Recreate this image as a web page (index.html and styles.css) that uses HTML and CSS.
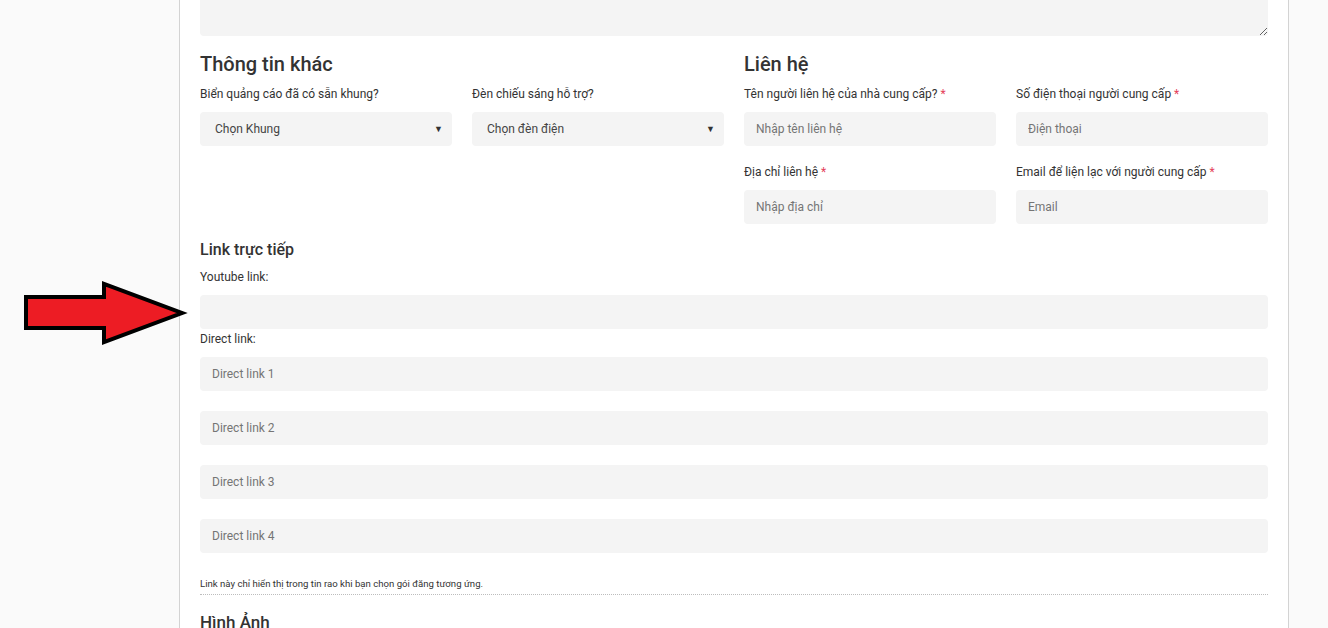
FILE: index.html
```html
<!DOCTYPE html>
<html lang="vi">
<head>
<meta charset="utf-8">
<title>Form</title>
<link rel="stylesheet" href="styles.css">
</head>
<body>
<svg class="arrow" width="170" height="70" viewBox="0 0 170 70">
  <polygon points="2,16 80,16 80,3 158,32 80,61 80,47 2,47" fill="#ed1c24" stroke="#000" stroke-width="4" stroke-linejoin="miter"/>
</svg>
<div class="panel">
  <textarea class="textarea"></textarea>
  <div class="two">
    <section class="section">
      <h2 class="title">Thông tin khác</h2>
      <div class="grid">
        <div class="field">
          <label class="label">Biển quảng cáo đã có sẵn khung?</label>
          <div class="select"><span>Chọn Khung</span><span class="caret">▼</span></div>
        </div>
        <div class="field">
          <label class="label">Đèn chiếu sáng hỗ trợ?</label>
          <div class="select"><span>Chọn đèn điện</span><span class="caret">▼</span></div>
        </div>
      </div>
    </section>
    <section class="section">
      <h2 class="title">Liên hệ</h2>
      <div class="grid">
        <div class="field">
          <label class="label">Tên người liên hệ của nhà cung cấp? <span class="req">*</span></label>
          <input class="input" placeholder="Nhập tên liên hệ">
        </div>
        <div class="field">
          <label class="label">Số điện thoại người cung cấp <span class="req">*</span></label>
          <input class="input" placeholder="Điện thoại">
        </div>
        <div class="field">
          <label class="label">Địa chỉ liên hệ <span class="req">*</span></label>
          <input class="input" placeholder="Nhập địa chỉ">
        </div>
        <div class="field">
          <label class="label">Email để liện lạc với người cung cấp <span class="req">*</span></label>
          <input class="input" placeholder="Email">
        </div>
      </div>
    </section>
  </div>

  <h3 class="subtitle">Link trực tiếp</h3>
  <label class="label yt-label">Youtube link:</label>
  <input class="input wide">
  <label class="label dl-label">Direct link:</label>
  <div class="links">
    <input class="input wide" placeholder="Direct link 1">
    <input class="input wide" placeholder="Direct link 2">
    <input class="input wide" placeholder="Direct link 3">
    <input class="input wide" placeholder="Direct link 4">
  </div>
  <p class="note">Link này chỉ hiển thị trong tin rao khi bạn chọn gói đăng tương ứng.</p>
  <h3 class="subtitle images">Hình Ảnh</h3>
</div>
</body>
</html>
```
FILE: styles.css
```css
* { box-sizing: border-box; }
html, body { margin: 0; padding: 0; }
body {
  background: #fafafa;
  font-family: Roboto, "Noto Sans", sans-serif;
  color: #333;
  height: 628px;
  overflow: hidden;
  position: relative;
}
.arrow {
  position: absolute;
  left: 24px;
  top: 281px;
  z-index: 5;
}
.panel {
  margin-left: 179px;
  width: 1110px;
  min-height: 640px;
  background: #fff;
  border-left: 1px solid #d3d3d3;
  border-right: 1px solid #d3d3d3;
  padding: 0 20px;
}
.textarea {
  display: block;
  width: 100%;
  height: 36px;
  border: none;
  background: #f4f4f4;
  border-radius: 0 0 4px 4px;
  resize: vertical;
  outline: none;
}
.two {
  display: grid;
  grid-template-columns: 1fr 1fr;
  gap: 20px;
}
.title {
  margin: 16px 0 0;
  font-size: 20px;
  line-height: 24px;
  font-weight: 500;
  color: #333;
}
.grid {
  display: grid;
  grid-template-columns: 1fr 1fr;
  column-gap: 20px;
  row-gap: 17px;
  margin-top: 9px;
}
.field { display: flex; flex-direction: column; }
.label {
  display: block;
  font-size: 12px;
  line-height: 18px;
  color: #333;
}
.req { color: #e4415a; }
.select, .input {
  height: 34px;
  margin-top: 9px;
  background: #f4f4f4;
  border: none;
  border-radius: 4px;
  font-family: Roboto, "Noto Sans", sans-serif;
  font-size: 12px;
  outline: none;
}
.select {
  display: flex;
  align-items: center;
  justify-content: space-between;
  padding: 0 9px 1px 15px;
  color: #444;
}
.caret { font-size: 9px; color: #333; }
.input {
  display: block;
  width: 100%;
  padding: 0 12px 1px;
  color: #333;
}
.input::placeholder { color: #757575; }
.subtitle {
  margin: 15px 0 0;
  font-size: 16px;
  line-height: 22px;
  font-weight: 500;
  color: #333;
}
.yt-label { margin-top: 7px; }
.yt-label + .input { margin-top: 9px; }
.dl-label { margin-top: 1px; }
.links { display: flex; flex-direction: column; gap: 20px; margin-top: 9px; }
.links .input { margin-top: 0; }
.note {
  margin: 24px 0 0;
  font-size: 9.6px;
  line-height: 14px;
  color: #333;
  padding-bottom: 3px;
  border-bottom: 1px dotted #bdbdbd;
}
.images { margin-top: 16px; font-size: 17px; }
```
